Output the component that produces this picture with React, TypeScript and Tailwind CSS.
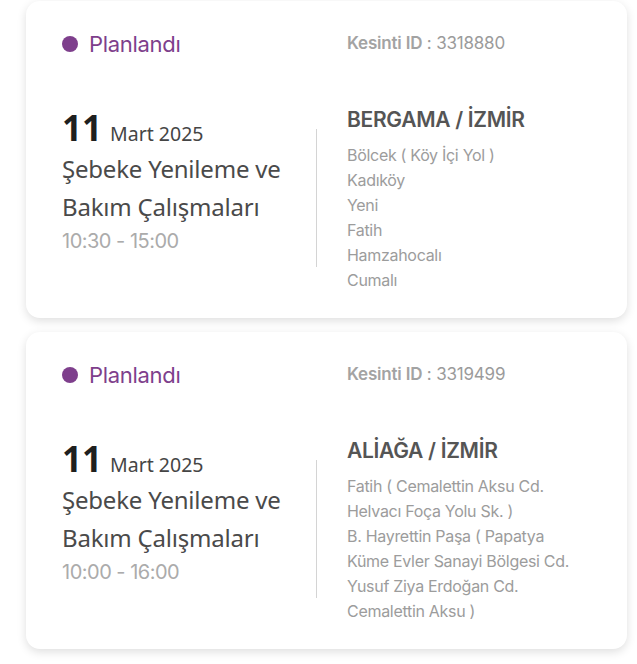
/*
 * Planlı kesinti kartları.
 * Sol: durum, tarih, başlık, saat aralığı. Sağ: kesinti no, ilçe/il ve etkilenen yerler.
 */

type Outage = {
  id: string;
  day: string;
  month: string;
  title: string[];
  time: string;
  district: string;
  places: string[];
};

const OUTAGES: Outage[] = [
  {
    id: "3318880",
    day: "11",
    month: "Mart 2025",
    title: ["Şebeke Yenileme ve", "Bakım Çalışmaları"],
    time: "10:30 - 15:00",
    district: "BERGAMA / İZMİR",
    places: [
      "Bölcek ( Köy İçi Yol )",
      "Kadıköy",
      "Yeni",
      "Fatih",
      "Hamzahocalı",
      "Cumalı",
    ],
  },
  {
    id: "3319499",
    day: "11",
    month: "Mart 2025",
    title: ["Şebeke Yenileme ve", "Bakım Çalışmaları"],
    time: "10:00 - 16:00",
    district: "ALİAĞA / İZMİR",
    places: [
      "Fatih ( Cemalettin Aksu Cd.",
      "Helvacı Foça Yolu Sk. )",
      "B. Hayrettin Paşa ( Papatya",
      "Küme Evler Sanayi Bölgesi Cd.",
      "Yusuf Ziya Erdoğan Cd.",
      "Cemalettin Aksu )",
    ],
  },
];

const GEO = { fontFamily: '"Inter", "Lato", sans-serif' };
const HUM = { fontFamily: '"Noto Sans", "Open Sans", sans-serif' };

export default function App() {
  return (
    <div className="min-h-screen bg-white pl-[26px] pr-[10px] pt-px">
      <div className="flex w-[601px] flex-col gap-[14px]">
        {OUTAGES.map((o) => (
          <OutageCard key={o.id} outage={o} />
        ))}
      </div>
    </div>
  );
}

function OutageCard({ outage }: { outage: Outage }) {
  return (
    <div className="rounded-[14px] bg-white pb-[25px] pl-9 pt-[31px] shadow-[0_3px_10px_rgba(0,0,0,0.13)]">
      {/* Üst satır */}
      <div className="flex items-center">
        <div className="flex w-[285px] items-center gap-[11px]">
          <span className="h-4 w-4 rounded-full bg-[#7e3f8c]" />
          <span
            className="text-[22px] leading-6 tracking-[-0.3px] text-[#7e3f8c]"
            style={GEO}
          >
            Planlandı
          </span>
        </div>
        <div
          className="-mt-[3px] text-[17px] leading-5 tracking-[-0.2px] text-[#9b9b9b]"
          style={GEO}
        >
          <span className="font-semibold text-[#a3a3a3]">Kesinti ID</span> :{" "}
          {outage.id}
        </div>
      </div>

      {/* Gövde */}
      <div className="mt-[47px] flex">
        <div className="w-[254px] pt-[7px]" style={HUM}>
          <div className="flex items-baseline gap-[8px]">
            <span className="text-[35px] font-bold leading-9 text-[#1f1f1f]">
              {outage.day}
            </span>
            <span className="text-[19.5px] text-[#454545]">{outage.month}</span>
          </div>
          <div className="mt-[2px] text-[24px] leading-[38px] tracking-[-0.2px] text-[#4a4a4a]">
            {outage.title.map((t) => (
              <div key={t}>{t}</div>
            ))}
          </div>
          <div
            className="mt-px text-[20px] leading-[28px] tracking-[-0.5px] text-[#ababab]"
            style={GEO}
          >
            {outage.time}
          </div>
        </div>

        <div className="h-[138px] w-px self-center bg-[#d4d4d4]" />

        <div className="pl-[30px] pt-[3px]" style={GEO}>
          <div className="text-[21px] font-semibold leading-7 tracking-[-0.3px] text-[#555555]">
            {outage.district}
          </div>
          <div className="mt-[9px] text-[16px] leading-[25px] tracking-[-0.3px] text-[#9c9c9c]">
            {outage.places.map((p) => (
              <div key={p}>{p}</div>
            ))}
          </div>
        </div>
      </div>
    </div>
  );
}
